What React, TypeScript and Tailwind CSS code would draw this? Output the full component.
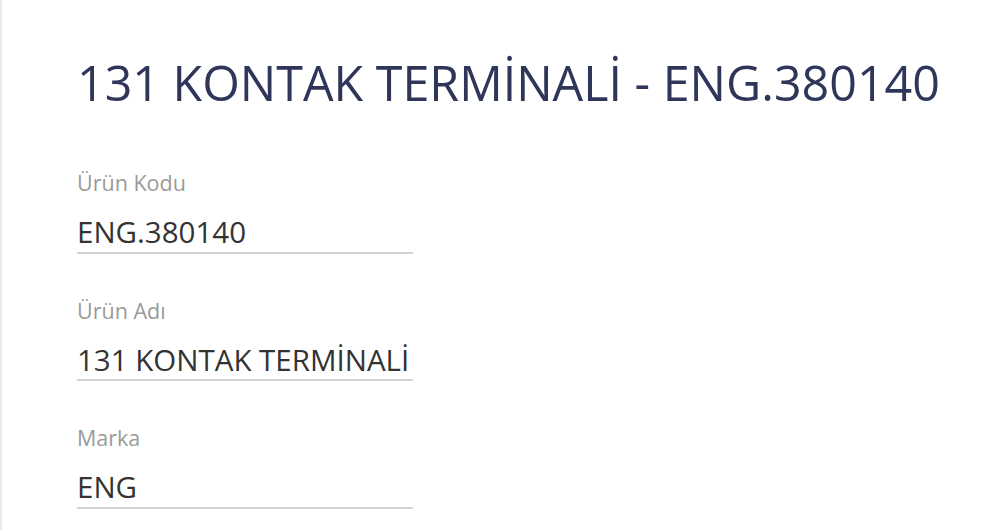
const fields = [
  { label: 'Ürün Kodu', value: 'ENG.380140' },
  { label: 'Ürün Adı', value: '131 KONTAK TERMİNALİ' },
  { label: 'Marka', value: 'ENG' },
];

export default function App() {
  return (
    <div
      className="w-[1000px] h-[530px] bg-white border-l-2 border-[#e8e8e8] overflow-hidden pl-[75px] pt-[58px]"
      style={{ fontFamily: '"Open Sans", "Noto Sans", sans-serif' }}
    >
      <h1 className="text-[48.4px] leading-[48px] font-normal text-[#2f3659] whitespace-nowrap">
        131 KONTAK TERMİNALİ - ENG.380140
      </h1>

      <div className="mt-[66px] flex flex-col gap-[46px]">
        {fields.map((f) => (
          <div key={f.label} className="w-[336px]">
            <div className="text-[21.5px] leading-[22px] font-normal text-[#9a9a9a]">{f.label}</div>
            <div className="mt-[23px] pb-[5px] border-b-2 border-[#d2d2d2] text-[29.5px] leading-[29.5px] text-[#333] whitespace-nowrap">
              {f.value}
            </div>
          </div>
        ))}
      </div>
    </div>
  );
}
